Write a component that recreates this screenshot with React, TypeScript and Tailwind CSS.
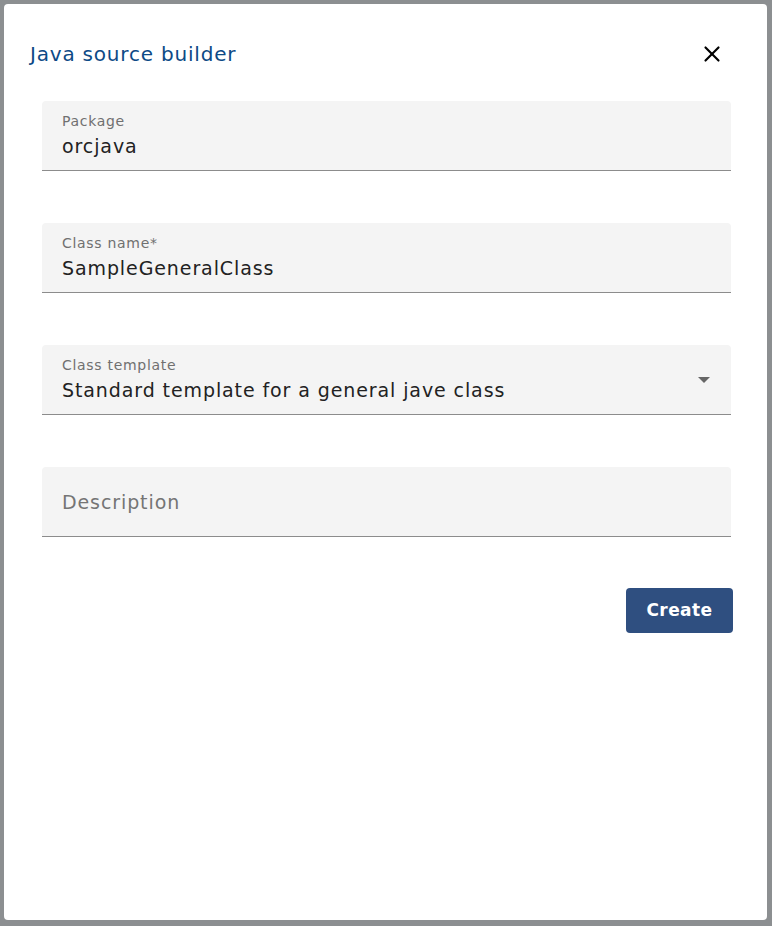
import { X } from "lucide-react";

function Field({ label, value, select }: { label?: string; value: string; select?: boolean }) {
  return (
    <div className="relative flex h-[70px] flex-col justify-center rounded-t border-b border-[#8c8c8c] bg-[#f4f4f4] px-5">
      {label ? (
        <>
          <span className="text-[14px] leading-4 tracking-[0.7px] text-[#707070]">{label}</span>
          <span className="mt-[5px] text-[19px] leading-6 tracking-[0.9px] text-[#222]">{value}</span>
        </>
      ) : (
        <span className="text-[19px] leading-6 tracking-[0.9px] text-[#757575]">{value}</span>
      )}
      {select && (
        <span className="absolute right-[21px] top-[32px] h-0 w-0 border-x-[6px] border-t-[6px] border-x-transparent border-t-[#666]" />
      )}
    </div>
  );
}

export default function App() {
  return (
    <div className="flex h-[926px] w-[772px] bg-[#8c8f91] p-1 pr-[5px] pb-[6px] font-['DejaVu_Sans',sans-serif]">
      <div className="flex flex-1 flex-col rounded bg-white">
        <div className="flex items-center justify-between pl-[26px] pr-[42px] pt-[36px]">
          <h2 className="text-[20px] leading-7 tracking-[0.8px] text-[#0d4a86]">Java source builder</h2>
          <X className="h-[26px] w-[26px] text-black" strokeWidth={2} />
        </div>
        <div className="mt-[33px] flex flex-col gap-[52px] pl-[38px] pr-[36px]">
          <Field label="Package" value="orcjava" />
          <Field label="Class name*" value="SampleGeneralClass" />
          <Field label="Class template" value="Standard template for a general jave class" select />
          <Field value="Description" />
        </div>
        <div className="mt-[51px] flex justify-end pr-[34px]">
          <button className="h-[45px] w-[107px] rounded bg-[#2f4f80] text-[17px] font-semibold tracking-wide text-white">
            Create
          </button>
        </div>
      </div>
    </div>
  );
}
